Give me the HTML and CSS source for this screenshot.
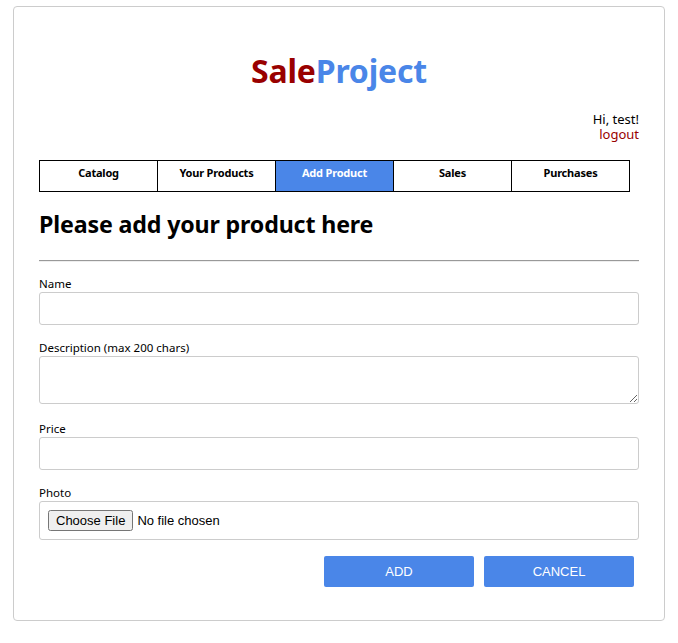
FILE: index.html
```html
<!DOCTYPE html>
<html>
<head>
<meta charset="utf-8">
<title>SaleProject</title>
<link rel="stylesheet" href="styles.css">
</head>
<body>
<div class="card">
  <h1 class="logo"><span class="sale">Sale</span><span class="project">Project</span></h1>
  <div class="user">
    <div class="hi">Hi, test!</div>
    <a class="logout" href="#">logout</a>
  </div>
  <nav class="tabs">
    <a class="tab" href="#">Catalog</a>
    <a class="tab" href="#">Your Products</a>
    <a class="tab active" href="#">Add Product</a>
    <a class="tab" href="#">Sales</a>
    <a class="tab" href="#">Purchases</a>
  </nav>
  <h2 class="heading">Please add your product here</h2>
  <hr class="rule">
  <form class="form">
    <label class="label first">Name</label>
    <input class="field" type="text">
    <label class="label">Description (max 200 chars)</label>
    <textarea class="field area"></textarea>
    <label class="label after-area">Price</label>
    <input class="field" type="text">
    <label class="label">Photo</label>
    <div class="filebox"><input class="file" type="file"></div>
    <div class="actions">
      <button class="btn" type="button">ADD</button>
      <button class="btn" type="button">CANCEL</button>
    </div>
  </form>
</div>
</body>
</html>
```
FILE: styles.css
```css
* { box-sizing: border-box; }
body {
  margin: 0;
  padding-top: 6px;
  font-family: "Noto Sans", "Open Sans", sans-serif;
  color: #000;
  background: #fff;
}
.card {
  width: 652px;
  margin: 0 auto;
  border: 1px solid #ccc;
  border-radius: 4px;
  padding: 0 25px 33px;
  height: 615px;
}
.logo {
  margin: 0;
  padding-top: 44px;
  text-align: center;
  font-size: 32px;
  line-height: 40px;
  font-weight: bold;
  letter-spacing: -0.2px;
}
.sale { color: #990000; }
.project { color: #4a86e8; }
.user {
  margin-top: 21px;
  text-align: right;
  font-size: 13px;
  line-height: 15px;
}
.hi { display: block; }
.logout {
  display: inline-block;
  line-height: 15px;
  color: #990000;
  text-decoration: none;
}
.tabs {
  display: flex;
  margin-top: 18px;
  width: 591px;
  border: 1px solid #000;
}
.tab {
  flex: 1;
  height: 30px;
  line-height: 24px;
  text-align: center;
  font-size: 11px;
  font-weight: bold;
  letter-spacing: -0.2px;
  color: #000;
  text-decoration: none;
  border-left: 1px solid #000;
}
.tab:first-child { border-left: none; }
.tab.active { background: #4a86e8; color: #fff; }
.heading {
  margin: 16px 0 0;
  font-size: 23.2px;
  line-height: 32px;
  font-weight: bold;
  letter-spacing: -0.15px;
}
.rule {
  margin: 20px 0 0;
  border: none;
  border-top: 1px solid #999;
  border-bottom: 1px solid #eee;
  height: 0;
}
.form { display: flex; flex-direction: column; }
.label {
  margin-top: 15px;
  font-size: 11.5px;
  line-height: 16px;
}
.label.first { margin-top: 14px; }
.label.after-area { margin-top: 17px; }
.field {
  display: block;
  width: 600px;
  height: 33px;
  border: 1px solid #ccc;
  border-radius: 3px;
  font-family: inherit;
  margin: 0;
}
.area { height: 48px; resize: vertical; }
.filebox {
  width: 600px;
  height: 39px;
  border: 1px solid #ccc;
  border-radius: 3px;
  padding: 0 8px;
  display: flex;
  align-items: center;
}
.file {
  font-family: "Liberation Sans", Arial, sans-serif;
  font-size: 13px;
}
.actions {
  display: flex;
  justify-content: flex-end;
  gap: 10px;
  margin-top: 16px;
  padding-right: 5px;
}
.btn {
  width: 150px;
  height: 31px;
  background: #4a86e8;
  color: #fff;
  border: none;
  border-radius: 2px;
  font-family: "Liberation Sans", Arial, sans-serif;
  font-size: 13px;
}
```
